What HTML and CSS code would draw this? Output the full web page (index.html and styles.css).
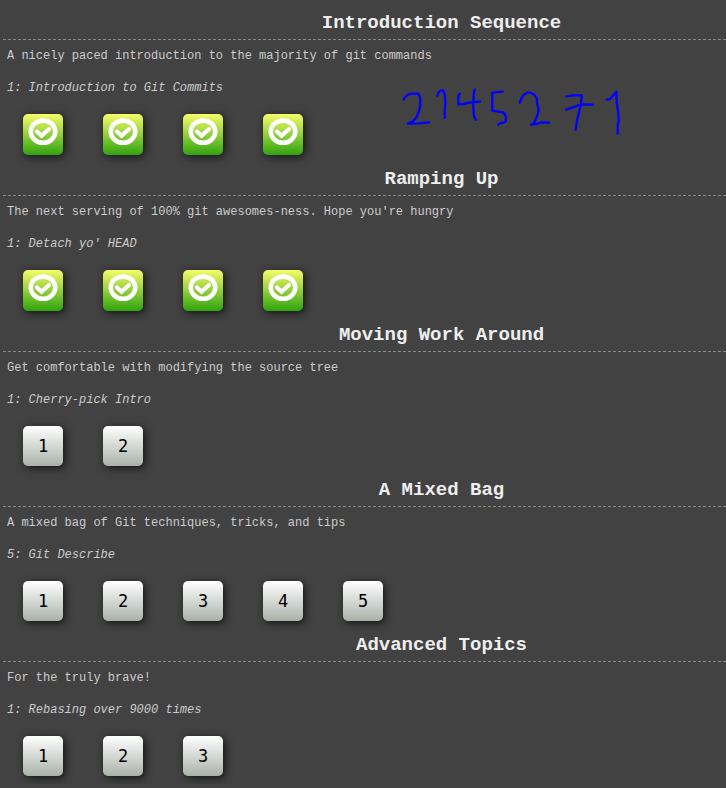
FILE: index.html
```html
<!DOCTYPE html>
<html lang="en">
<head>
<meta charset="utf-8">
<title>Levels</title>
<link rel="stylesheet" href="styles.css">
</head>
<body>
<svg width="0" height="0" class="defs" aria-hidden="true">
  <symbol id="check" viewBox="0 0 30 28">
    <ellipse cx="15" cy="13.600" rx="12.300" ry="11.200" fill="none" stroke="#fff" stroke-width="4.500"/>
    <path d="M9 13.500l4.500 4.200 7.500-6.700" fill="none" stroke="#fff" stroke-width="4.200" stroke-linecap="round"/>
  </symbol>
</svg>
<main class="levels">
  <section class="sequence">
    <h3>Introduction Sequence</h3>
    <p>A nicely paced introduction to the majority of git commands</p>
    <p class="current">1: Introduction to Git Commits</p>
    <div class="icons">
      <button class="level solved" aria-label="Level 1, solved"><svg><use href="#check"/></svg></button>
      <button class="level solved" aria-label="Level 2, solved"><svg><use href="#check"/></svg></button>
      <button class="level solved" aria-label="Level 3, solved"><svg><use href="#check"/></svg></button>
      <button class="level solved" aria-label="Level 4, solved"><svg><use href="#check"/></svg></button>
    </div>
    <svg class="handwriting" viewBox="0 0 750 195" role="img" aria-label="2145271">
      <path d="M41 59L43 54 54 44 66 41H85L90 52 91 74 87 93 80 111 70 123 54 131 86 130 117 127"/>
      <path d="M142 47L146 37 153 31 160 32 164 41 166 69 164 94V114"/>
      <path d="M209 41L205 49V73L220 72 240 67 270 65M254 28L251 43 250 83 252 108 257 119"/>
      <path d="M338 35L307 38V92L325 95 342 98 348 112 347 124 340 128 330 130 325 134"/>
      <path d="M389 68L395 54 402 44 411 38 422 38 433 44 440 55 442 74 446 87 444 100 438 116 431 131 423 134 438 132 455 127 477 128"/>
      <path d="M529 49L550 46H575L573 72 567 96 561 122 557 149M529 89L548 82 565 76 582 73 608 74"/>
      <path d="M650 59L660 57 670 46 679 35 680 69 685 98 686 122 683 137V161"/>
    </svg>
  </section>
  <section class="sequence">
    <h3>Ramping Up</h3>
    <p>The next serving of 100% git awesomes-ness. Hope you're hungry</p>
    <p class="current">1: Detach yo' HEAD</p>
    <div class="icons">
      <button class="level solved" aria-label="Level 1, solved"><svg><use href="#check"/></svg></button>
      <button class="level solved" aria-label="Level 2, solved"><svg><use href="#check"/></svg></button>
      <button class="level solved" aria-label="Level 3, solved"><svg><use href="#check"/></svg></button>
      <button class="level solved" aria-label="Level 4, solved"><svg><use href="#check"/></svg></button>
    </div>
  </section>
  <section class="sequence">
    <h3>Moving Work Around</h3>
    <p>Get comfortable with modifying the source tree</p>
    <p class="current">1: Cherry-pick Intro</p>
    <div class="icons">
      <button class="level">1</button>
      <button class="level">2</button>
    </div>
  </section>
  <section class="sequence">
    <h3>A Mixed Bag</h3>
    <p>A mixed bag of Git techniques, tricks, and tips</p>
    <p class="current">5: Git Describe</p>
    <div class="icons">
      <button class="level">1</button>
      <button class="level">2</button>
      <button class="level">3</button>
      <button class="level">4</button>
      <button class="level">5</button>
    </div>
  </section>
  <section class="sequence">
    <h3>Advanced Topics</h3>
    <p>For the truly brave!</p>
    <p class="current">1: Rebasing over 9000 times</p>
    <div class="icons">
      <button class="level">1</button>
      <button class="level">2</button>
      <button class="level">3</button>
    </div>
  </section>
</main>
</body>
</html>
```
FILE: styles.css
```css
* {
  box-sizing: border-box;
}

body {
  margin: 0;
  background: #424242;
  color: #ccc;
  font-family: "Liberation Mono", "Courier New", monospace;
  font-size: 12px;
  line-height: 32px;
}

.defs {
  position: absolute;
}

.levels {
  padding: 8px 0 0 3px;
}

.sequence {
  position: relative;
  padding-bottom: 8px;
}

h3 {
  margin: 0;
  padding: 1px 0 0 154px;
  border-bottom: 1px dashed #888;
  color: #eee;
  font-size: 19px;
  line-height: 31px;
  text-align: center;
}

.sequence:first-child h3 {
  padding-top: 0;
}

p {
  margin: 0;
  padding-left: 4px;
}

.current {
  font-style: italic;
}

.icons {
  display: flex;
  gap: 40px;
  padding: 10px 20px 0;
}

.level {
  display: flex;
  align-items: center;
  justify-content: center;
  width: 40px;
  height: 40px;
  padding: 0;
  border: 0;
  border-radius: 5px;
  background: linear-gradient(#fff, #a9b2a9);
  box-shadow: 2px 2px 8px rgba(0, 0, 0, 0.7);
  color: #000;
  font-family: "DejaVu Sans Mono", monospace;
  font-size: 17px;
}

.solved {
  align-items: flex-start;
  height: 41px;
  padding-top: 4px;
  background: linear-gradient(#f7fb6b, #2fa30f);
}

.solved svg {
  width: 30px;
  height: 28px;
}

.handwriting {
  position: absolute;
  top: 72px;
  left: 387px;
  width: 250px;
  height: 65px;
  fill: none;
  stroke: #00f;
  stroke-width: 7;
  stroke-linecap: round;
  stroke-linejoin: round;
}
```
